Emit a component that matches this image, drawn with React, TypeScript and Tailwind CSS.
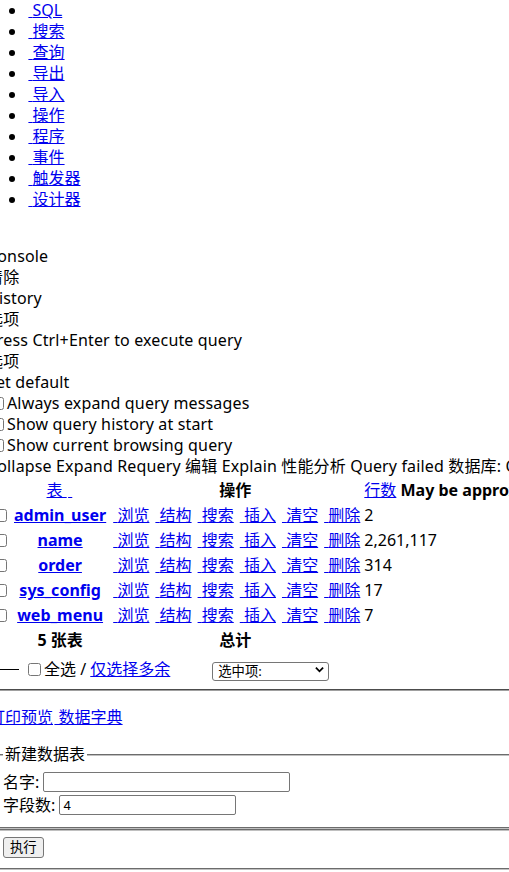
import React from "react";

const link = "text-[#0000ee] underline";
const Dot = () => <span className="inline-block w-[1.4px] h-px" />;
const Dot2 = () => <span className="inline-block w-[2px] h-px" />;

const tabs = ["SQL", "搜索", "查询", "导出", "导入", "操作", "程序", "事件", "触发器", "设计器"];
const actions = ["浏览", "结构", "搜索", "插入", "清空", "删除"];
const rows: [string, string][] = [
  ["admin_user", "2"],
  ["name", "2,261,117"],
  ["order", "314"],
  ["sys_config", "17"],
  ["web_menu", "7"],
];

function Cb({ className = "" }: { className?: string }) {
  return <input type="checkbox" className={"w-[13px] h-[13px] " + className} />;
}

export default function App() {
  return (
    <div className="w-[509px] h-[872px] overflow-hidden bg-white text-black text-[16px] leading-[21px] font-['Noto_Sans','Noto_Sans_CJK_SC',sans-serif]">
      <div className="-ml-[13px] w-[640px]">
        <ul className="list-disc pl-10">
          {tabs.map((t) => (
            <li key={t}>
              <a className={link} href="#">
                <Dot /> {t}
              </a>
            </li>
          ))}
        </ul>

        <div className="mt-[36px] whitespace-nowrap tracking-[0.15px]">
          <div>Console</div>
          <div>清除</div>
          <div>History</div>
          <div>选项</div>
          <div>Press Ctrl+Enter to execute query</div>
          <div>选项</div>
          <div>Set default</div>
          <div className="flex items-center h-[21px]">
            <Cb className="ml-[4px] mr-[3px]" />
            <span>Always expand query messages</span>
          </div>
          <div className="flex items-center h-[21px]">
            <Cb className="ml-[4px] mr-[3px]" />
            <span>Show query history at start</span>
          </div>
          <div className="flex items-center h-[21px]">
            <Cb className="ml-[4px] mr-[3px]" />
            <span>Show current browsing query</span>
          </div>
          <div>Collapse Expand Requery 编辑 Explain 性能分析 Query failed 数据库: Queried time:</div>
        </div>

        <table className="border-separate border-spacing-[2px] whitespace-nowrap">
          <thead>
            <tr>
              <th className="p-px"></th>
              <th className="p-px text-center font-normal">
                <a className={link} href="#">
                  表 <Dot /> <Dot />
                </a>
              </th>
              <th colSpan={6} className="p-px text-center font-bold">
                操作
              </th>
              <th className="p-px text-left font-bold">
                <a className={link + " font-normal"} href="#">
                  行数
                </a>{" "}
                May be approximate. See FAQ 3.11
              </th>
            </tr>
          </thead>
          <tbody>
            {rows.map(([name, count]) => (
              <tr key={name}>
                <td className="p-px h-[23px] align-middle">
                  <div className="flex items-center">
                    <Cb className="ml-[4px] mr-[3px]" />
                  </div>
                </td>
                <th className="p-px text-center font-bold">
                  <a className={link} href="#">
                    {name}
                  </a>
                </th>
                {actions.map((a, i) => (
                  <td key={a} className={i === 0 ? "p-px pl-[2px]" : "p-px"}>
                    <a className={link} href="#">
                      <Dot2 /> {a}
                    </a>
                  </td>
                ))}
                <td className="p-px">{count}</td>
              </tr>
            ))}
          </tbody>
          <tfoot>
            <tr>
              <th className="p-px"></th>
              <th className="p-px text-center font-bold">5 张表</th>
              <th colSpan={6} className="p-px text-center font-bold">
                总计
              </th>
              <th className="p-px"></th>
            </tr>
          </tfoot>
        </table>

        <div className="flex items-center mt-[4px] h-[23px] whitespace-pre">
          <span className="inline-block w-[32px] h-px bg-black" />
          <Cb className="ml-[9px] mr-[3px]" />
          <span>全选 / </span>
          <a className={link} href="#">
            仅选择多余
          </a>
          <div className="relative ml-[42px] w-[117px] h-[19px]">
            <select className="appearance-none w-full h-full border border-[#767676] rounded-[3px] bg-white pl-[5px] text-[13.33px] leading-[17px]">
              <option>选中项:</option>
            </select>
            <svg
              className="absolute right-[5px] top-[5px] pointer-events-none"
              width="9"
              height="9"
              viewBox="0 0 10 10"
            >
              <path d="M1 3 L5 7 L9 3" fill="none" stroke="black" strokeWidth="2" />
            </svg>
          </div>
        </div>

        <hr className="mt-[8px] h-0 border [border-style:inset] border-[#a0a0a0]" />

        <p className="mt-4 whitespace-nowrap">
          <a className={link + " ml-[2px]"} href="#">
            打印预览
          </a>
          <a className={link} href="#">
            <Dot /> 数据字典
          </a>
        </p>

        <fieldset className="mt-4 mx-[2px] px-[12px] pt-[5.6px] pb-[10px] border-2 [border-style:groove] border-[#c0c0c0]">
          <legend className="px-[2px]">新建数据表</legend>
          <div className="flex items-center h-[23px] whitespace-pre">
            <span>名字: </span>
            <input
              type="text"
              className="w-[247px] h-[20px] border border-[#767676] rounded-[2px] px-[3px] text-[13.33px] font-['Liberation_Sans',sans-serif]"
            />
          </div>
          <div className="flex items-center h-[23px] whitespace-pre">
            <span>字段数: </span>
            <input
              type="text"
              defaultValue="4"
              className="w-[177px] h-[20px] border border-[#767676] rounded-[2px] px-[3px] text-[13.33px] font-['Liberation_Sans',sans-serif]"
            />
          </div>
        </fieldset>

        <fieldset className="mx-[2px] px-[12px] pt-[5.6px] pb-[10px] border-2 [border-style:groove] border-[#c0c0c0]">
          <button className="h-[21px] px-[6px] border border-[#767676] rounded-[3px] bg-[#efefef] text-[13.33px] leading-[17px]">
            执行
          </button>
        </fieldset>
      </div>
    </div>
  );
}
